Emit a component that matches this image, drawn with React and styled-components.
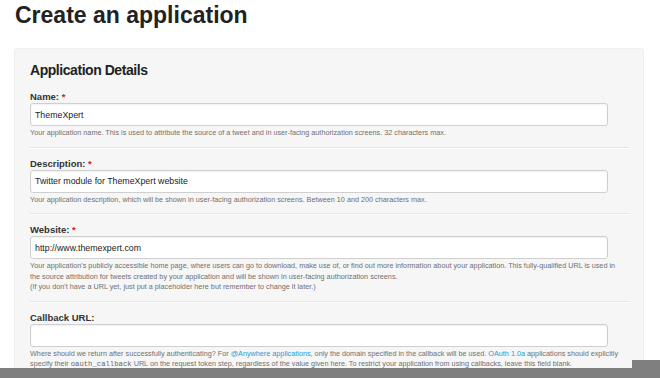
import React from "react";
import styled, { createGlobalStyle } from "styled-components";

const fields = [
  {
    id: "name",
    label: "Name:",
    required: true,
    value: "ThemeXpert",
    help: [
      "Your application name. This is used to attribute the source of a tweet and in user-facing authorization screens. 32 characters max.",
    ],
  },
  {
    id: "description",
    label: "Description:",
    required: true,
    value: "Twitter module for ThemeXpert website",
    help: [
      "Your application description, which will be shown in user-facing authorization screens. Between 10 and 200 characters max.",
    ],
  },
  {
    id: "website",
    label: "Website:",
    required: true,
    value: "http://www.themexpert.com",
    help: [
      "Your application's publicly accessible home page, where users can go to download, make use of, or find out more information about your application. This fully-qualified URL is used in",
      "the source attribution for tweets created by your application and will be shown in user-facing authorization screens.",
      "(If you don't have a URL yet, just put a placeholder here but remember to change it later.)",
    ],
  },
];

function App() {
  return (
    <>
      <GlobalStyle />
      <Page>
        <Title>Create an application</Title>
        <Panel>
          <Heading>Application Details</Heading>
          {fields.map((f) => (
            <Field key={f.id}>
              <Label htmlFor={f.id}>
                {f.label} {f.required && <Req>*</Req>}
              </Label>
              <Input id={f.id} defaultValue={f.value} />
              <Help>
                {f.help.map((line, i) => (
                  <span key={i}>
                    {line}
                    {i < f.help.length - 1 && <br />}
                  </span>
                ))}
              </Help>
            </Field>
          ))}
          <Field $last>
            <Label htmlFor="callback">Callback URL:</Label>
            <Input id="callback" />
            <Help>
              Where should we return after successfully authenticating? For{" "}
              <A href="#">@Anywhere applications</A>, only the domain specified in the
              callback will be used. <A href="#">OAuth 1.0a</A> applications should
              explicitly
              <br />
              specify their <Code>oauth_callback</Code> URL on the request token step,
              regardless of the value given here. To restrict your application from
              using callbacks, leave this field blank.
            </Help>
          </Field>
        </Panel>
      </Page>
      <BottomBar>
        <BarMain />
        <BarSide />
      </BottomBar>
    </>
  );
}

const GlobalStyle = createGlobalStyle`
  body {
    margin: 0;
    background: #fff;
    font-family: "Liberation Sans", Arial, sans-serif;
    color: #333;
    overflow: hidden;
  }
`;

const Page = styled.div`
  padding: 0 0 0 14px;
  width: 630px;
`;

const Title = styled.h1`
  margin: 0;
  font-size: 23px;
  line-height: 30px;
  font-weight: bold;
  color: #222;
  padding-left: 1px;
`;

const Panel = styled.div`
  margin-top: 18px;
  background: #f6f6f6;
  border: 1px solid #efefef;
  border-radius: 3px;
  padding: 12px 14px 20px 15px;
`;

const Heading = styled.h2`
  margin: 0 0 2px;
  font-size: 14px;
  line-height: 18px;
  letter-spacing: -0.45px;
  font-weight: bold;
  color: #222;
`;

const Field = styled.div`
  padding: 10px 0 8px;
  border-bottom: ${(p) => (p.$last ? "none" : "1px solid #e3e3e3")};
  box-shadow: ${(p) => (p.$last ? "none" : "0 1px 0 #fff")};
`;

const Label = styled.label`
  display: block;
  font-size: 9.5px;
  line-height: 12px;
  font-weight: bold;
  color: #333;
`;

const Req = styled.span`
  color: #d02020;
`;

const Input = styled.input`
  display: block;
  box-sizing: border-box;
  width: 578px;
  height: 23px;
  padding: 0 4px;
  border: 1px solid #cfcfcf;
  border-radius: 3px;
  background: #fff;
  box-shadow: inset 0 1px 2px rgba(0, 0, 0, 0.06);
  font-family: "Liberation Sans", Arial, sans-serif;
  font-size: 8.8px;
  color: #222;
  outline: none;
`;

const Help = styled.p`
  margin: 2px 0 0;
  font-size: 7.25px;
  line-height: 10.5px;
  color: #707070;
`;

const A = styled.a`
  color: #2a9ad6;
  text-decoration: none;
`;

const Code = styled.code`
  font-family: "Liberation Mono", monospace;
  font-size: 7.25px;
  color: #666;
`;

const BottomBar = styled.div`
  position: fixed;
  left: 0;
  right: 0;
  bottom: 0;
  height: 18px;
  display: flex;
  align-items: flex-end;
`;

const BarMain = styled.div`
  flex: 1;
  height: 10px;
  background: #7f7f7f;
`;

const BarSide = styled.div`
  width: 28px;
  height: 18px;
  background: #7f7f7f;
`;

export default App;
